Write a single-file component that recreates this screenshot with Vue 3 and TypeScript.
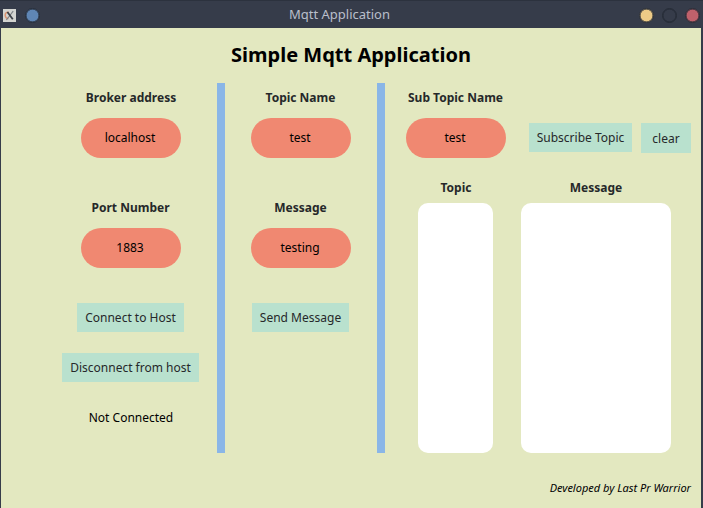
<script setup lang="ts">
import { ref } from 'vue'

const broker = ref('localhost')
const port = ref('1883')
const topic = ref('test')
const message = ref('testing')
const subTopic = ref('test')
const status = ref('Not Connected')
</script>

<template>
  <div class="window">
    <header class="titlebar">
      <svg class="app-icon" width="13" height="13" viewBox="0 0 13 13">
        <rect width="13" height="13" fill="#d3d4d0" />
        <path d="M5.5 3.2C3.2 3 2 4.6 2.2 6.5S3.8 9.6 5.4 9.5" fill="none" stroke="#dc9470" stroke-width="1.5" />
        <path d="M10.2 2.2L3.4 11" stroke="#7c8084" stroke-width="1.1" />
        <path d="M4.4 3L9.8 10.2" stroke="#3c4046" stroke-width="1.8" />
      </svg>
      <span class="dot blue"></span>
      <span class="caption">Mqtt Application</span>
      <span class="dot yellow"></span>
      <span class="dot hollow"></span>
      <span class="dot red"></span>
    </header>

    <main class="client">
      <h1 class="title">Simple Mqtt Application</h1>
      <div class="panels">
        <section class="column">
          <label class="label">Broker address</label>
          <input v-model="broker" class="pill" />
          <label class="label next">Port Number</label>
          <input v-model="port" class="pill" />
          <button class="btn first connect">Connect to Host</button>
          <button class="btn second disconnect">Disconnect from host</button>
          <p class="status">{{ status }}</p>
        </section>
        <div class="divider"></div>
        <section class="column">
          <label class="label">Topic Name</label>
          <input v-model="topic" class="pill" />
          <label class="label next">Message</label>
          <input v-model="message" class="pill" />
          <button class="btn first send">Send Message</button>
        </section>
        <div class="divider"></div>
        <section class="subscribe">
          <div class="sub-row">
            <div class="sub-field">
              <label class="label">Sub Topic Name</label>
              <input v-model="subTopic" class="pill" />
            </div>
            <button class="btn sub">Subscribe Topic</button>
            <button class="btn clear">clear</button>
          </div>
          <div class="lists">
            <div class="list narrow">
              <span class="heading">Topic</span>
              <div class="box"></div>
            </div>
            <div class="list wide">
              <span class="heading">Message</span>
              <div class="box"></div>
            </div>
          </div>
        </section>
      </div>
      <footer class="credit">Developed by Last Pr Warrior</footer>
    </main>
  </div>
</template>

<style>
body {
  margin: 0;
  overflow: hidden;
}
</style>

<style scoped>
.window {
  box-sizing: border-box;
  width: 703px;
  height: 508px;
  background: #363c4a;
  font-family: 'Noto Sans', 'Open Sans', sans-serif;
  font-size: 12px;
  color: #000;
}
.titlebar {
  box-sizing: border-box;
  display: flex;
  align-items: center;
  height: 28px;
  padding: 2px 3px 0;
  border-top: 1px solid #2c323e;
}
.app-icon {
  flex: none;
}
.dot {
  box-sizing: border-box;
  flex: none;
  width: 15px;
  height: 15px;
  border: 1px solid #252b36;
  border-radius: 50%;
  box-shadow: inset 0 0 0 0.5px #252b36;
}
.blue {
  margin-left: 9px;
  background: #5f86b5;
}
.yellow {
  background: #edcb87;
}
.hollow {
  margin-left: 8px;
}
.red {
  margin-left: 8px;
  background: #c0616b;
}
.caption {
  flex: 1;
  padding-bottom: 4px;
  text-align: center;
  font-size: 13px;
  line-height: 18px;
  color: #b9bfca;
}
.client {
  box-sizing: border-box;
  width: 700px;
  height: 480px;
  margin-left: 1px;
  background: #e3e8c0;
}
.title {
  height: 55px;
  margin: 0;
  text-align: center;
  font-size: 20px;
  font-weight: 700;
  line-height: 54px;
}
.panels {
  display: grid;
  grid-template-columns: 152px 8px 152px 8px 1fr;
  height: 370px;
  padding-left: 64px;
}
.divider {
  background: #8ab6e7;
}
.column {
  display: flex;
  flex-direction: column;
  align-items: center;
}
.column:first-child {
  padding-right: 20px;
}
.label,
.heading {
  height: 20px;
  font-weight: 700;
  line-height: 20px;
  color: #26282a;
}
.label {
  margin: 5px 1px 10px 0;
}
.heading {
  margin: 5px 0;
}
.narrow .heading {
  margin-left: 1px;
}
.column:first-child .label:first-child {
  margin-right: 0;
}
.next {
  margin-top: 40px;
}
.pill {
  box-sizing: border-box;
  flex: none;
  width: 100px;
  height: 40px;
  padding: 0 2px 2px 0;
  border: 0;
  border-radius: 20px;
  outline: 0;
  background: #f08871;
  color: #000;
  font: inherit;
  text-align: center;
}
.btn {
  flex: none;
  height: 29px;
  padding: 0;
  border: 0;
  background: #b9e1ce;
  color: #26282a;
  font: inherit;
  line-height: 29px;
  white-space: nowrap;
}
.first {
  margin: 35px 1px 0 0;
}
.second {
  margin: 21px 1px 0 0;
}
.connect {
  width: 107px;
}
.disconnect {
  width: 137px;
}
.send {
  width: 97px;
}
.status {
  margin: 26px 0 0;
  line-height: 20px;
}
.sub-row {
  display: flex;
  align-items: flex-start;
  height: 90px;
  padding-left: 21px;
}
.sub-field {
  display: flex;
  flex-direction: column;
  align-items: center;
  width: 100px;
}
.sub {
  width: 103px;
  margin: 40px 9px 0 23px;
}
.clear {
  width: 50px;
  height: 30px;
  margin-top: 40px;
  padding-top: 1px;
}
.lists {
  display: flex;
  gap: 28px;
  padding-left: 33px;
}
.list {
  display: flex;
  flex-direction: column;
  align-items: center;
}
.narrow {
  width: 75px;
}
.wide {
  width: 150px;
}
.box {
  width: 100%;
  height: 250px;
  border-radius: 10px;
  background: #fff;
}
.credit {
  padding: 25px 10px 0 0;
  text-align: right;
  font-size: 11px;
  font-style: italic;
  line-height: 20px;
}
</style>
